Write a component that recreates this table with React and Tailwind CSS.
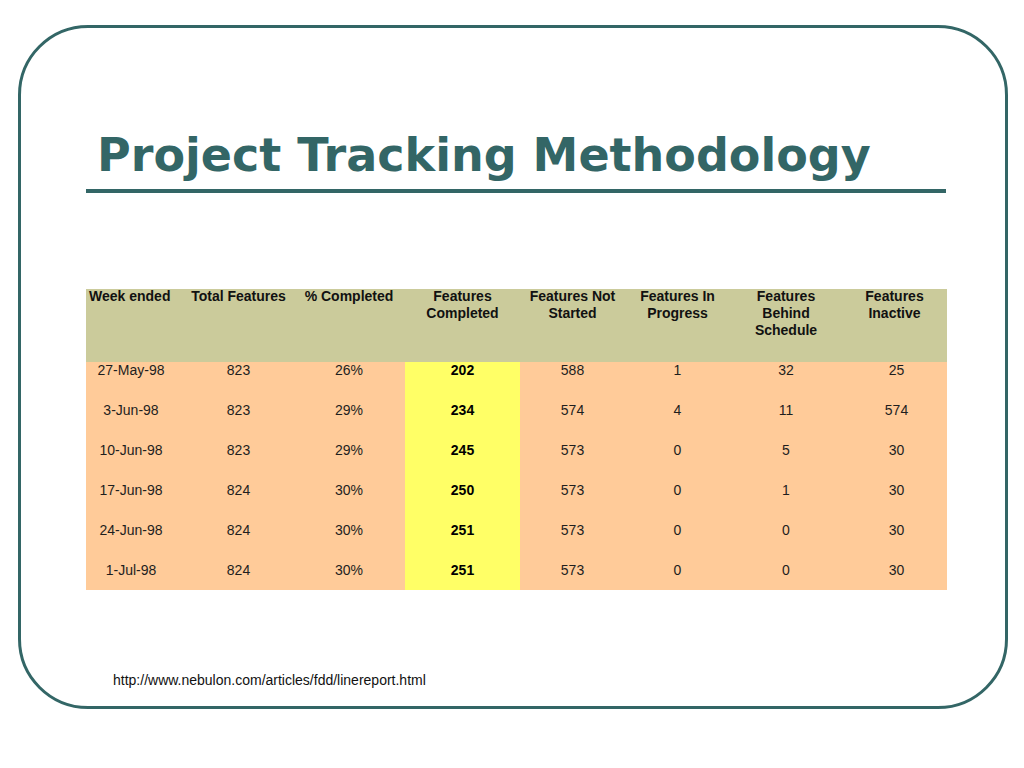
import React from "react";

const headers = [
  { t: ["Week ended"], left: true },
  { t: ["Total Features"] },
  { t: ["% Completed"] },
  { t: ["Features", "Completed"] },
  { t: ["Features Not", "Started"] },
  { t: ["Features In", "Progress"] },
  { t: ["Features", "Behind", "Schedule"] },
  { t: ["Features", "Inactive"] },
];

const rows = [
  ["27-May-98", "823", "26%", "202", "588", "1", "32", "25"],
  ["3-Jun-98", "823", "29%", "234", "574", "4", "11", "574"],
  ["10-Jun-98", "823", "29%", "245", "573", "0", "5", "30"],
  ["17-Jun-98", "824", "30%", "250", "573", "0", "1", "30"],
  ["24-Jun-98", "824", "30%", "251", "573", "0", "0", "30"],
  ["1-Jul-98", "824", "30%", "251", "573", "0", "0", "30"],
];

const gridCols = "grid grid-cols-[98px_109px_112px_115px_105px_105px_112px_105px]";
const cellPad = ["pr-[8px]", "", "", "", "", "", "", "pl-[4px]"];

export default function App() {
  return (
    <div
      className="w-[1024px] h-[768px] bg-white pt-[25px] pl-[18px]"
      style={{ fontFamily: '"Liberation Sans", Arial, sans-serif' }}
    >
      <div className="w-[990px] h-[684px] border-[3px] border-[#336666] rounded-[70px] flex flex-col pl-[65px]">
        <h1
          className="mt-[104px] pl-[11px] text-[46px] leading-[47px] font-bold text-[#336666] whitespace-nowrap"
          style={{ fontFamily: '"DejaVu Sans", Verdana, sans-serif' }}
        >
          Project Tracking Methodology
        </h1>
        <div className="mt-[10px] w-[860px] h-[4px] bg-[#336666]" />
        <div className="mt-[96px] w-[861px] text-[14px] leading-[17px]">
          <div className={`${gridCols} h-[73px] bg-[#cbcb9b] font-bold text-[#111]`}>
            {headers.map((h, i) => (
              <div
                key={i}
                className={`${h.left ? "text-left pl-[3px]" : "text-center"} -mt-[1px]`}
              >
                {h.t.map((line, j) => (
                  <div key={j}>{line}</div>
                ))}
              </div>
            ))}
          </div>
          {rows.map((r, ri) => (
            <div
              key={ri}
              className={`${gridCols} ${ri === rows.length - 1 ? "h-[28px]" : "h-[40px]"} bg-[#ffcb99] text-[#1e1e1e]`}
            >
              {r.map((c, ci) => (
                <div
                  key={ci}
                  className={`text-center ${cellPad[ci]} ${ci === 3 ? "bg-[#ffff66] font-bold text-black" : ""}`}
                >
                  {c}
                </div>
              ))}
            </div>
          ))}
        </div>
        <div className="mt-[82px] pl-[27px] text-[14px] leading-[16px] text-[#111]">
          http://www.nebulon.com/articles/fdd/linereport.html
        </div>
      </div>
    </div>
  );
}
